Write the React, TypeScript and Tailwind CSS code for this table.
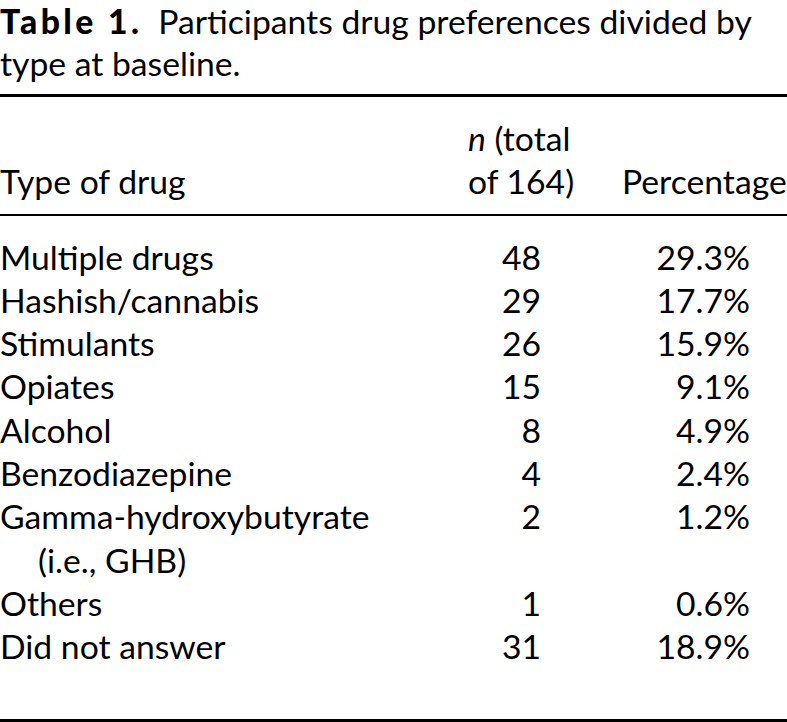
import React from 'react'

type Row = { label: string; extra?: string; n: string; pct: string }

const rows: Row[] = [
  { label: 'Multiple drugs', n: '48', pct: '29.3%' },
  { label: 'Hashish/cannabis', n: '29', pct: '17.7%' },
  { label: 'Stimulants', n: '26', pct: '15.9%' },
  { label: 'Opiates', n: '15', pct: '9.1%' },
  { label: 'Alcohol', n: '8', pct: '4.9%' },
  { label: 'Benzodiazepine', n: '4', pct: '2.4%' },
  { label: 'Gamma-hydroxybutyrate', extra: '(i.e., GHB)', n: '2', pct: '1.2%' },
  { label: 'Others', n: '1', pct: '0.6%' },
  { label: 'Did not answer', n: '31', pct: '18.9%' },
]

export default function App() {
  return (
    <div className="w-[787px] h-[722px] overflow-hidden bg-white text-black font-['Lato',sans-serif] text-[33.7px] leading-[43.3px]">
      {/* caption */}
      <div className="pb-[10px]">
        <p className="whitespace-nowrap leading-[42px]">
          <span className="font-black tracking-[0.1em]">Table 1.</span>
          <span className="ml-[16px]">Participants drug preferences divided by</span>
          <br />
          type at baseline.
        </p>
      </div>

      <div className="border-t-[3px] border-black" />

      {/* header */}
      <div className="flex items-end pt-[20px] pb-[10px]">
        <div className="w-[440px]">Type of drug</div>
        <div className="w-[140px] pl-[28px] whitespace-nowrap">
          <i>n</i> (total
          <br />
          of 164)
        </div>
        <div className="flex-1 pl-[42px] whitespace-nowrap">Percentage</div>
      </div>

      <div className="border-t-[2px] border-black" />

      {/* body */}
      <div className="pt-[20px] pb-[50px]">
        {rows.map((r) => (
          <div key={r.label} className="flex">
            <div className="w-[440px]">
              <div className="whitespace-nowrap">{r.label}</div>
              {r.extra && <div className="pl-[38px]">{r.extra}</div>}
            </div>
            <div className="w-[140px] pr-[39px] text-right">{r.n}</div>
            <div className="flex-1 pr-[37px] text-right">{r.pct}</div>
          </div>
        ))}
      </div>

      <div className="border-t-[3px] border-black" />
    </div>
  )
}
